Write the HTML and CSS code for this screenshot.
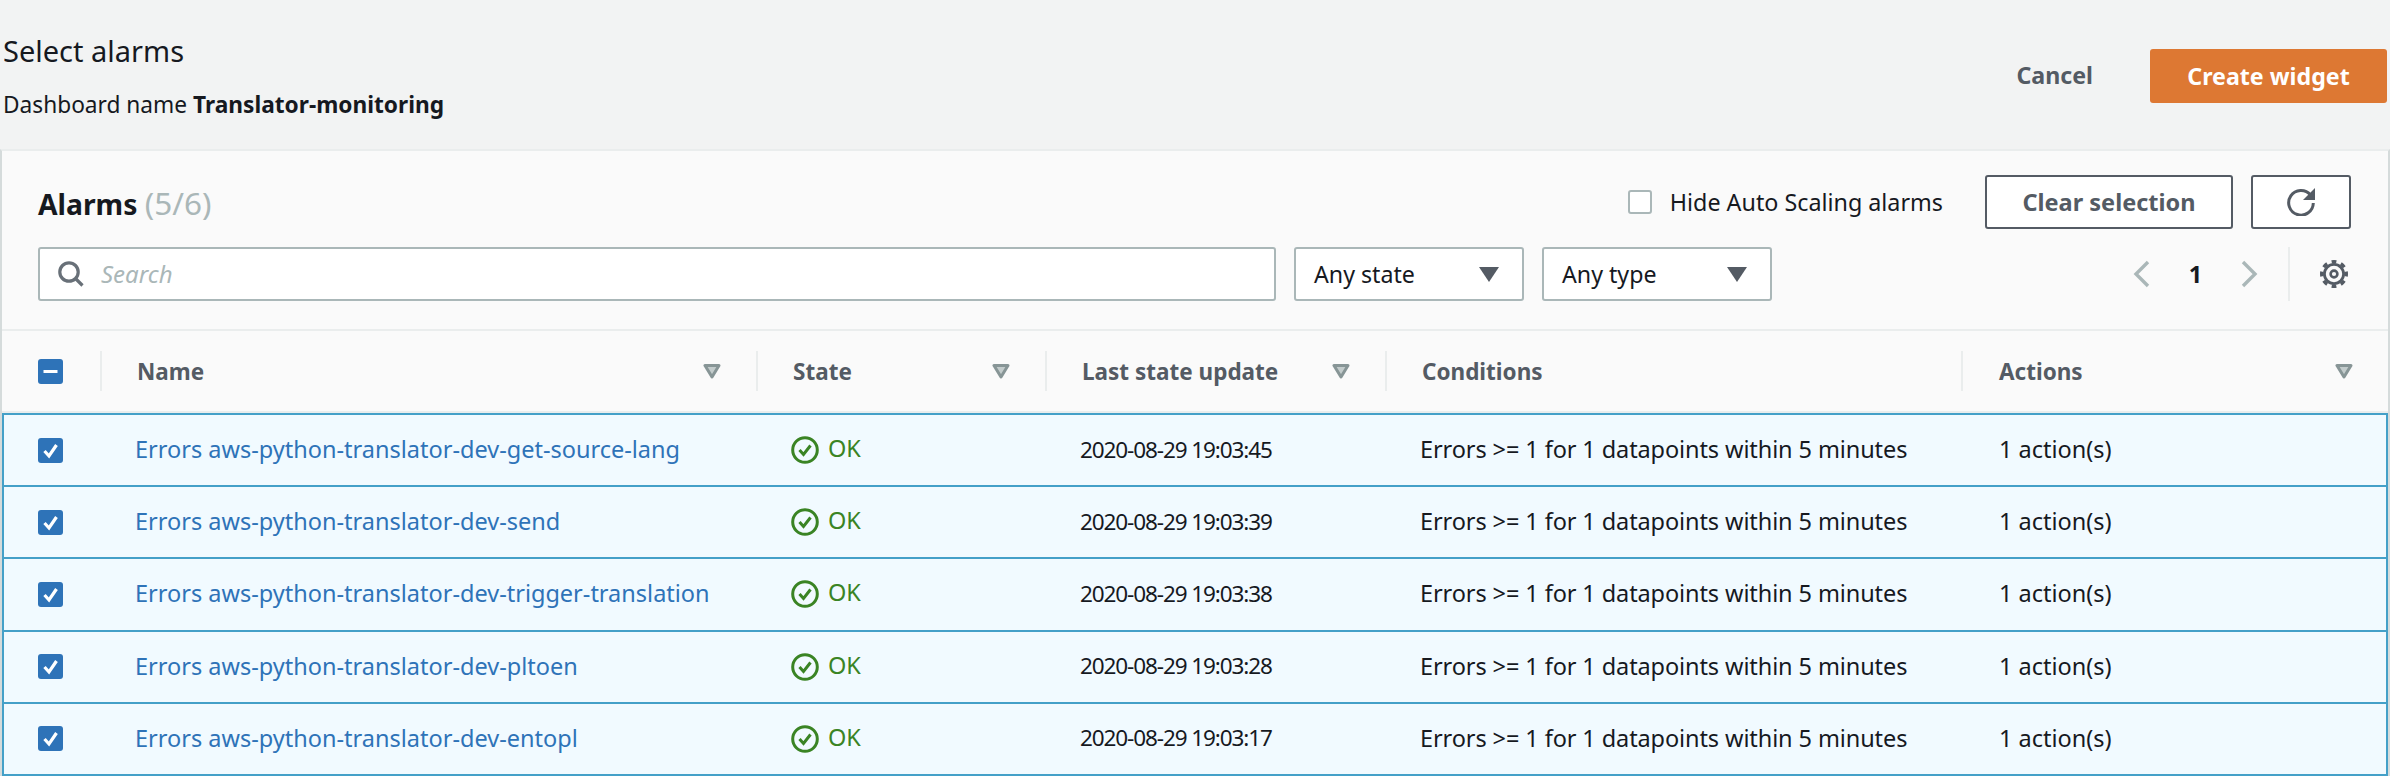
FILE: index.html
```html
<!DOCTYPE html>
<html lang="en">
<head>
  <meta charset="UTF-8">
  <meta name="viewport" content="width=device-width, initial-scale=1.0">
  <title>Select alarms</title>
  <link rel="stylesheet" href="styles.css">
</head>
<body>

  <svg class="defs" width="0" height="0">
    <symbol id="sort" viewBox="0 0 18 15"><path d="M2 1.5h14L9 13z" fill="#c3cccc" stroke="#879596" stroke-width="3" stroke-linejoin="round"/></symbol>
    <symbol id="tick" viewBox="0 0 25 25"><rect width="25" height="25" rx="3" fill="#2e73b8"/><path d="M6.5 13l4.5 5 7.5-11" fill="none" stroke="#fff" stroke-width="3.2"/></symbol>
    <symbol id="ok" viewBox="0 0 28 28"><circle cx="14" cy="14" r="12.3" fill="none" stroke="#3a8424" stroke-width="3"/><path d="M8.5 14l4 4.5 7-9" fill="none" stroke="#3a8424" stroke-width="3"/></symbol>
  </svg>

  <div class="top">
    <div>
      <h1>Select alarms</h1>
      <p>Dashboard name <b>Translator-monitoring</b></p>
    </div>
    <div class="top-actions">
      <a class="cancel">Cancel</a>
      <button class="primary">Create widget</button>
    </div>
  </div>

  <div class="panel">
    <div class="tools">
      <div class="tools-row">
        <h2>Alarms <span>(5/6)</span></h2>
        <label class="hide-scaling"><i class="box"></i> Hide Auto Scaling alarms</label>
        <button class="plain clear">Clear selection</button>
        <button class="plain refresh">
          <svg width="28" height="28" viewBox="0 0 28 28"><path d="M23.5 7A12.300 12.300 0 1 0 26.300 15" fill="none" stroke="#545b64" stroke-width="3"/><path d="M28 0v12H16z" fill="#545b64"/></svg>
        </button>
      </div>
      <div class="tools-row">
        <div class="search">
          <svg width="26" height="26" viewBox="0 0 26 26"><circle cx="11" cy="11" r="9.2" fill="none" stroke="#687078" stroke-width="3.2"/><path d="M17 17l7.5 7.5" stroke="#687078" stroke-width="3.2"/></svg>
          <em>Search</em>
        </div>
        <div class="select">Any state <i class="caret"></i></div>
        <div class="select">Any type <i class="caret"></i></div>
        <div class="pager">
          <svg width="17" height="28" viewBox="0 0 17 28"><path d="M15 2L3 14l12 12" fill="none" stroke="#aab7b8" stroke-width="3.4"/></svg>
          <b>1</b>
          <svg width="17" height="28" viewBox="0 0 17 28"><path d="M2 2l12 12L2 26" fill="none" stroke="#aab7b8" stroke-width="3.4"/></svg>
          <span class="pager-line"></span>
          <svg width="28" height="28" viewBox="0 0 28 28"><circle cx="14" cy="14" r="9.600" fill="none" stroke="#545b64" stroke-width="2.800"/><circle cx="14" cy="14" r="12.300" fill="none" stroke="#545b64" stroke-width="3.400" pathLength="16" stroke-dasharray="1 1" stroke-dashoffset=".5"/><circle cx="14" cy="14" r="3.400" fill="none" stroke="#545b64" stroke-width="2.600"/></svg>
        </div>
      </div>
    </div>

    <div class="cols head">
      <div class="th first"><svg class="check" width="25" height="25" viewBox="0 0 25 25"><rect width="25" height="25" rx="3" fill="#2e73b8"/><path d="M5.500 12.500h14" stroke="#fff" stroke-width="3"/></svg></div>
      <div class="th">Name <svg width="18" height="15"><use href="#sort"/></svg></div>
      <div class="th">State <svg width="18" height="15"><use href="#sort"/></svg></div>
      <div class="th">Last state update <svg width="18" height="15"><use href="#sort"/></svg></div>
      <div class="th">Conditions</div>
      <div class="th actions-head">Actions <svg width="18" height="15"><use href="#sort"/></svg></div>
    </div>

    <div class="cols row">
      <div class="td first"><svg class="check" width="25" height="25"><use href="#tick"/></svg></div>
      <div class="td name"><a>Errors aws-python-translator-dev-get-source-lang</a></div>
      <div class="td state"><svg width="28" height="28"><use href="#ok"/></svg> <span>OK</span></div>
      <div class="td date">2020-08-29 19:03:45</div>
      <div class="td cond">Errors &gt;= 1 for 1 datapoints within 5 minutes</div>
      <div class="td acts">1 action(s)</div>
    </div>
    <div class="cols row">
      <div class="td first"><svg class="check" width="25" height="25"><use href="#tick"/></svg></div>
      <div class="td name"><a>Errors aws-python-translator-dev-send</a></div>
      <div class="td state"><svg width="28" height="28"><use href="#ok"/></svg> <span>OK</span></div>
      <div class="td date">2020-08-29 19:03:39</div>
      <div class="td cond">Errors &gt;= 1 for 1 datapoints within 5 minutes</div>
      <div class="td acts">1 action(s)</div>
    </div>
    <div class="cols row">
      <div class="td first"><svg class="check" width="25" height="25"><use href="#tick"/></svg></div>
      <div class="td name"><a>Errors aws-python-translator-dev-trigger-translation</a></div>
      <div class="td state"><svg width="28" height="28"><use href="#ok"/></svg> <span>OK</span></div>
      <div class="td date">2020-08-29 19:03:38</div>
      <div class="td cond">Errors &gt;= 1 for 1 datapoints within 5 minutes</div>
      <div class="td acts">1 action(s)</div>
    </div>
    <div class="cols row">
      <div class="td first"><svg class="check" width="25" height="25"><use href="#tick"/></svg></div>
      <div class="td name"><a>Errors aws-python-translator-dev-pltoen</a></div>
      <div class="td state"><svg width="28" height="28"><use href="#ok"/></svg> <span>OK</span></div>
      <div class="td date">2020-08-29 19:03:28</div>
      <div class="td cond">Errors &gt;= 1 for 1 datapoints within 5 minutes</div>
      <div class="td acts">1 action(s)</div>
    </div>
    <div class="cols row">
      <div class="td first"><svg class="check" width="25" height="25"><use href="#tick"/></svg></div>
      <div class="td name"><a>Errors aws-python-translator-dev-entopl</a></div>
      <div class="td state"><svg width="28" height="28"><use href="#ok"/></svg> <span>OK</span></div>
      <div class="td date">2020-08-29 19:03:17</div>
      <div class="td cond">Errors &gt;= 1 for 1 datapoints within 5 minutes</div>
      <div class="td acts">1 action(s)</div>
    </div>
  </div>

</body>
</html>
```

FILE: styles.css
```css
* {
  box-sizing: border-box;
}

html, body {
  height: 778px;
  overflow: hidden;
}

body {
  margin: 0;
  font-family: "Noto Sans", sans-serif;
  font-size: 23.5px;
  color: #16191f;
  background: #fff;
}

.defs {
  position: absolute;
}

.top {
  height: 149px;
  background: #f2f3f3;
  display: flex;
  justify-content: space-between;
  padding: 33px 3px 0 3px;
}

h1 {
  margin: 0;
  font-size: 29px;
  font-weight: 400;
  line-height: 36px;
}

.top p {
  margin: 19px 0 0;
  font-size: 22.7px;
  line-height: 33px;
}

.top-actions {
  display: flex;
  align-items: center;
  gap: 57px;
  height: 54px;
  margin-top: 16px;
  font-size: 23.2px;
}

.cancel {
  font-weight: 700;
  color: #545b64;
  margin-bottom: 2px;
}

button {
  font: inherit;
  font-weight: 700;
  border-radius: 3px;
}

.primary {
  width: 237px;
  height: 54px;
  border: none;
  background: #dd7833;
  color: #fff;
}

.panel {
  background: #fafafa;
  border: 2px solid #d5dbdb;
  border-top-color: #eaeded;
  border-bottom: none;
}

.tools {
  padding: 24px 37px 28px 36px;
  border-bottom: 2px solid #eaeded;
  display: flex;
  flex-direction: column;
  gap: 18px;
}

.tools-row {
  display: flex;
  align-items: center;
  height: 54px;
}

h2 {
  margin: 0 auto 0 0;
  font-size: 28.3px;
  font-weight: 700;
}

h2 span {
  font-size: 31.5px;
  font-weight: 400;
  color: #aab7b8;
}

.hide-scaling {
  display: flex;
  align-items: center;
  gap: 18px;
  margin-right: 42px;
  font-size: 23.3px;
}

.box {
  width: 24px;
  height: 24px;
  background: #fff;
  border: 2px solid #aab7b8;
  border-radius: 3px;
}

.plain {
  height: 54px;
  background: #fff;
  border: 2px solid #545b64;
  color: #545b64;
}

.clear {
  width: 248px;
  margin-right: 18px;
}

.refresh {
  width: 100px;
  display: flex;
  align-items: center;
  justify-content: center;
  padding: 0;
}

.search, .select {
  height: 54px;
  background: #fff;
  border: 2px solid #aab7b8;
  border-radius: 3px;
  display: flex;
  align-items: center;
}

.search {
  width: 1238px;
  padding-left: 18px;
  gap: 17px;
}

.search em {
  font-size: 24px;
  color: #aab7b8;
  margin-bottom: 2px;
}

.select {
  width: 230px;
  margin-left: 18px;
  padding: 0 23px 0 18px;
  justify-content: space-between;
  font-size: 23.2px;
}

.caret {
  border-left: 10px solid transparent;
  border-right: 10px solid transparent;
  border-top: 15px solid #545b64;
}

.pager {
  margin-left: auto;
  margin-right: 3px;
  display: flex;
  align-items: center;
  height: 54px;
}

.pager b {
  width: 91px;
  text-align: center;
}

.pager-line {
  width: 2px;
  height: 54px;
  background: #eaeded;
  margin: 0 30px;
}

.cols {
  display: grid;
  grid-template-columns: 98px 656px 289px 340px 576px 1fr;
}

.head {
  height: 82px;
  border-bottom: 2px solid #eaeded;
}

.th {
  display: flex;
  align-items: center;
  justify-content: space-between;
  font-size: 22.5px;
  font-weight: 700;
  color: #545b64;
  padding: 0 35px 0 37px;
  position: relative;
}

.th + .th::before {
  content: "";
  position: absolute;
  left: 0;
  top: 20px;
  width: 2px;
  height: 40px;
  background: #eaeded;
}

.actions-head {
  padding-left: 38px;
}

.first {
  padding-left: 36px;
}

.check {
  display: block;
}

.row {
  height: 72.25px;
  background: #f1faff;
  border: 2px solid #44a0c8;
  border-top: none;
  grid-template-columns: 96px 656px 289px 340px 576px 1fr;
  color: #16191f;
}

.head + .row {
  height: 74px;
  border-top: 2px solid #44a0c8;
}

.td {
  display: flex;
  align-items: center;
  padding-left: 35px;
  padding-bottom: 2px;
}

.td.first {
  padding-left: 34px;
  padding-bottom: 0;
}

.name a {
  color: #2e73b8;
}

.state {
  color: #3a8424;
  gap: 9px;
  padding-bottom: 0;
}

.state span {
  margin-top: -4px;
}

.date {
  font-size: 22.5px;
  letter-spacing: -1.1px;
}

.cond {
  letter-spacing: -.1px;
}

.acts {
  padding-left: 38px;
}
```
